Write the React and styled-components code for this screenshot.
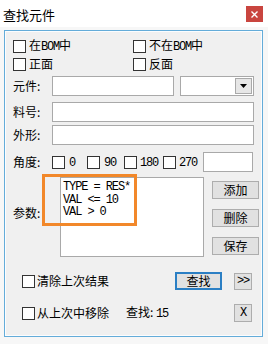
import React from "react";
import styled, { createGlobalStyle } from "styled-components";

const Global = createGlobalStyle`
  html, body { margin: 0; padding: 0; background: #f5f5f5; }
  * { box-sizing: border-box; }
  body { font-family: "Noto Sans CJK SC", "Noto Sans", sans-serif; font-size: 12px; color: #000; }
`;

const Window = styled.div`
  width: 268px;
  height: 344px;
  background: #f7f7f7;
  display: flex;
  flex-direction: column;
  overflow: hidden;
`;

const TitleBar = styled.div`
  height: 27px;
  background: #fff;
  display: flex;
  align-items: center;
  justify-content: space-between;
  padding: 0 5px 0 3px;
`;

const Title = styled.div`
  font-size: 13px;
  line-height: 13px;
  padding-top: 1px;
`;

const CloseBtn = styled.div`
  width: 17px;
  height: 16px;
  margin-top: 1px;
  background: #c9453f;
  display: flex;
  align-items: center;
  justify-content: center;
`;

const Frame = styled.div`
  margin: 3px 5px 0 4px;
  height: 307px;
  border: 1px solid #64acd9;
  box-shadow: inset 0 0 0 1px #fbfdff;
  background: #f0f0f0;
  padding: 0 8px;
  display: flex;
  flex-direction: column;
`;

const CheckRow = styled.div`
  display: grid;
  grid-template-columns: 120px 1fr;
  height: 18px;
  margin-top: ${(p) => p.$mt || 0}px;
`;

const CheckItem = styled.label`
  display: flex;
  align-items: center;
  gap: ${(p) => (p.$gap != null ? p.$gap : 3)}px;
  white-space: nowrap;
  line-height: 14px;
  margin-left: ${(p) => p.$ml || 0}px;
  width: ${(p) => (p.$w ? p.$w + "px" : "auto")};
  flex: none;
`;

const Box = styled.span`
  width: 13px;
  height: 13px;
  border: 1px solid #333;
  background: #fff;
  flex: none;
`;

const Latin = styled.span`
  font-family: "Liberation Mono", monospace;
  font-size: 12px;
  letter-spacing: -1.2px;
`;

const FieldRow = styled.div`
  display: grid;
  grid-template-columns: 39px 1fr;
  align-items: center;
  height: 20px;
  margin-top: ${(p) => p.$mt || 0}px;
`;

const Label = styled.div`
  white-space: nowrap;
  line-height: 14px;
`;

const Input = styled.div`
  height: 20px;
  width: ${(p) => (p.$w ? p.$w + "px" : "100%")};
  background: #fff;
  border: 1px solid #a9a9a9;
  flex: none;
`;

const Pair = styled.div`
  display: flex;
  gap: 6px;
`;

const Select = styled.div`
  height: 20px;
  flex: 1;
  background: #fff;
  border: 1px solid #a9a9a9;
  display: flex;
  justify-content: flex-end;
  padding: 1px;
`;

const SelectBtn = styled.div`
  width: 17px;
  height: 16px;
  background: #e6e6e6;
  border: 1px solid #a9a9a9;
  display: flex;
  align-items: center;
  justify-content: center;
`;

const AngleWrap = styled.div`
  display: flex;
  align-items: center;
`;

const ParamRow = styled.div`
  position: relative;
  display: grid;
  grid-template-columns: 39px 144px 47px;
  column-gap: 8px;
  height: 80px;
  margin-top: 5px;
`;

const ParamLabel = styled(Label)`
  align-self: center;
  padding-bottom: 8px;
`;

const TextArea = styled.div`
  height: 80px;
  background: #fff;
  border: 1px solid #a9a9a9;
  padding: 3px 2px;
  font-family: "Liberation Mono", monospace;
  font-size: 12px;
  letter-spacing: -1.1px;
  line-height: 12.6px;
  white-space: pre;
`;

const Highlight = styled.div`
  position: absolute;
  left: 29px;
  top: -3px;
  width: 95px;
  height: 52px;
  border: 3px solid #f2882a;
  pointer-events: none;
`;

const BtnCol = styled.div`
  display: flex;
  flex-direction: column;
  gap: 10px;
  padding-top: 4px;
`;

const Button = styled.div`
  width: ${(p) => p.$w || 47}px;
  height: ${(p) => p.$h || 18}px;
  background: #e1e1e1;
  border: ${(p) => (p.$primary ? "2px solid #2b7fc4" : "1px solid #adadad")};
  display: flex;
  align-items: center;
  justify-content: center;
  line-height: 12px;
  flex: none;
  margin-left: ${(p) => p.$ml || 0}px;
`;

const BottomRow = styled.div`
  display: flex;
  align-items: center;
  height: 18px;
  margin-top: ${(p) => p.$mt || 0}px;
  padding-right: 2px;
`;

const Spacer = styled.div`
  flex: 1;
`;

const Count = styled.div`
  margin-left: 17px;
  white-space: nowrap;
  line-height: 14px;
`;

const Check = ({ children, ...rest }) => (
  <CheckItem {...rest}>
    <Box />
    <span>{children}</span>
  </CheckItem>
);

export default function App() {
  return (
    <>
      <Global />
      <Window>
        <TitleBar>
          <Title>查找元件</Title>
          <CloseBtn>
            <svg width="7" height="7" viewBox="0 0 7 7">
              <path d="M0.5 0.5L6.5 6.5M6.5 0.5L0.5 6.5" stroke="#fff" strokeWidth="1.4" />
            </svg>
          </CloseBtn>
        </TitleBar>
        <Frame>
          <CheckRow $mt={6}>
            <Check>在<Latin>BOM</Latin>中</Check>
            <Check>不在<Latin>BOM</Latin>中</Check>
          </CheckRow>
          <CheckRow>
            <Check>正面</Check>
            <Check>反面</Check>
          </CheckRow>
          <FieldRow $mt={3}>
            <Label>元件:</Label>
            <Pair>
              <Input $w={122} />
              <Select>
                <SelectBtn>
                  <svg width="7" height="4" viewBox="0 0 7 4">
                    <path d="M0 0H7L3.5 4Z" fill="#000" />
                  </svg>
                </SelectBtn>
              </Select>
            </Pair>
          </FieldRow>
          <FieldRow $mt={6}>
            <Label>料号:</Label>
            <Input />
          </FieldRow>
          <FieldRow $mt={3}>
            <Label>外形:</Label>
            <Input />
          </FieldRow>
          <FieldRow $mt={7}>
            <Label>角度:</Label>
            <AngleWrap>
              <Check $w={35} $gap={4}><Latin>0</Latin></Check>
              <Check $w={37} $gap={4}><Latin>90</Latin></Check>
              <Check $w={39} $gap={3}><Latin>180</Latin></Check>
              <Check $w={40} $gap={3}><Latin>270</Latin></Check>
              <Input $w={50} />
            </AngleWrap>
          </FieldRow>
          <ParamRow>
            <ParamLabel>参数:</ParamLabel>
            <TextArea>{"TYPE = RES*\nVAL <= 10\nVAL > 0"}</TextArea>
            <BtnCol>
              <Button>添加</Button>
              <Button>删除</Button>
              <Button>保存</Button>
            </BtnCol>
            <Highlight />
          </ParamRow>
          <BottomRow $mt={15}>
            <Check $ml={9} $gap={2}>清除上次结果</Check>
            <Spacer />
            <Button $primary>查找</Button>
            <Button $w={18} $h={17} $ml={12}><Latin>&gt;&gt;</Latin></Button>
          </BottomRow>
          <BottomRow $mt={14}>
            <Check $ml={9} $gap={2}>从上次中移除</Check>
            <Count>查找: <Latin>15</Latin></Count>
            <Spacer />
            <Button $w={18}><Latin>X</Latin></Button>
          </BottomRow>
        </Frame>
      </Window>
    </>
  );
}
